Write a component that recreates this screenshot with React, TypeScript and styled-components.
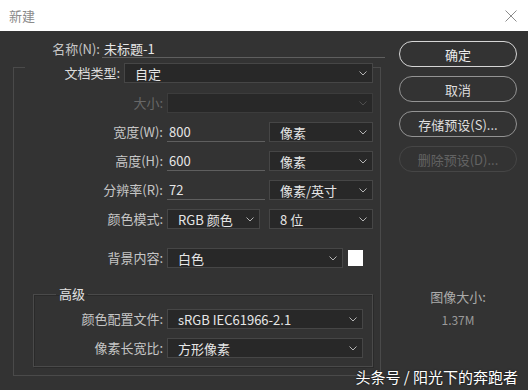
import styled, { createGlobalStyle } from "styled-components"

const Global = createGlobalStyle`
    html, body {
        margin: 0;
        padding: 0;
        background: #333333;
    }
    body {
        font-family: "Noto Sans CJK SC", "Noto Sans", sans-serif;
    }
`

const Janela = styled.div`
    position: relative;
    width: 528px;
    height: 390px;
    background: #333333;
    overflow: hidden;
`

const BarraTitulo = styled.div`
    height: 31px;
    background: #ffffff;
    display: flex;
    align-items: center;
    justify-content: space-between;
    padding: 0 11px 0 9px;
    box-sizing: border-box;
`

const Titulo = styled.span`
    font-size: 13px;
    color: #8a8a8a;
`

const Corpo = styled.div`
    display: flex;
    gap: 14px;
    padding-left: 13px;
`

const ColunaEsquerda = styled.div`
    width: 372px;
    display: flex;
    flex-direction: column;
`

const LinhaNome = styled.div`
    display: flex;
    align-items: center;
    gap: 2px;
    margin-top: 9px;
    height: 18px;
`

const Rotulo = styled.label<{ $dim?: boolean; $w?: number }>`
    ${({ $w }) => ($w ? `width: ${$w}px;` : "")}
    flex-shrink: 0;
    text-align: right;
    font-size: 13px;
    line-height: 20px;
    white-space: nowrap;
    color: ${({ $dim }) => ($dim ? "#686868" : "#c6c6c6")};
`

const CampoTexto = styled.div<{ $w: number }>`
    width: ${({ $w }) => $w}px;
    height: 18px;
    box-sizing: border-box;
    border-bottom: 1px solid #5f5f5f;
    padding-left: 2px;
    font-size: 13px;
    line-height: 17px;
    color: #e6e6e6;
    white-space: nowrap;
`

const Grupo = styled.fieldset<{ $inner?: boolean }>`
    margin: ${({ $inner }) => ($inner ? "9px 0 0 19px" : "-7px 0 0 0")};
    padding: ${({ $inner }) => ($inner ? "7px 9px 8px 0" : "10px 7px 8px 0")};
    width: ${({ $inner }) => ($inner ? "auto" : "368px")};
    box-sizing: border-box;
    min-inline-size: 0;
    border: 1px solid #4a4a4a;
    box-shadow: ${({ $inner }) => ($inner ? "inset 1px 1px 0 #2a2a2a, 1px 1px 0 #2a2a2a" : "none")};
    display: flex;
    flex-direction: column;
    gap: 9px;
`

const LegendaTipo = styled.legend`
    margin-left: 11px;
    padding: 12px 0 0 0;
    display: flex;
    align-items: center;
    gap: 4px;
`

const LegendaAvancado = styled.legend`
    margin-left: 22px;
    padding: 0 3px;
    font-size: 13px;
    line-height: 16px;
    color: #e2e2e2;
`

const Linha = styled.div<{ $label: number; $extra?: number }>`
    display: grid;
    grid-template-columns: ${({ $label }) => $label}px 1fr;
    column-gap: 4px;
    align-items: center;
    height: 20px;
    margin-top: ${({ $extra }) => $extra || 0}px;
`

const Campos = styled.div<{ $gap?: number }>`
    display: flex;
    align-items: center;
    gap: ${({ $gap }) => $gap ?? 4}px;
`

const Selecao = styled.div<{ $w?: number; $disabled?: boolean }>`
    width: ${({ $w }) => ($w ? `${$w}px` : "100%")};
    height: 20px;
    box-sizing: border-box;
    border: 1px solid ${({ $disabled }) => ($disabled ? "#3c3c3c" : "#464646")};
    background: #282828;
    display: flex;
    align-items: center;
    justify-content: space-between;
    padding: 0 5px 0 10px;
    font-size: 13px;
    color: #e6e6e6;
    white-space: nowrap;
    svg {
        flex-shrink: 0;
    }
`

const Entrada = styled.div<{ $w: number }>`
    width: ${({ $w }) => $w}px;
    height: 20px;
    box-sizing: border-box;
    border-bottom: 1px solid #5f5f5f;
    padding-left: 2px;
    font-size: 13px;
    line-height: 19px;
    color: #e6e6e6;
`

const Amostra = styled.div`
    width: 15px;
    height: 16px;
    background: #ffffff;
    margin-left: 1px;
`

const ColunaDireita = styled.div`
    width: 118px;
    display: flex;
    flex-direction: column;
    gap: 9px;
    margin-top: 10px;
`

const Botao = styled.button<{ $principal?: boolean }>`
    height: 26px;
    border-radius: 13px;
    background: transparent;
    font-family: inherit;
    font-size: 13px;
    padding: 0;
    border: ${({ $principal }) => ($principal ? "1.5px solid #d6d6d6" : "1px solid #939393")};
    color: ${({ $principal }) => ($principal ? "#ececec" : "#dedede")};
    &:disabled {
        border-color: #464646;
        color: #636363;
    }
`

const Info = styled.div`
    margin-top: 108px;
    display: flex;
    flex-direction: column;
    align-items: center;
    gap: 7px;
`

const InfoRotulo = styled.span`
    font-size: 13px;
    line-height: 16px;
    color: #ababab;
`

const InfoValor = styled.span`
    font-size: 12px;
    line-height: 16px;
    color: #9a9a9a;
`

const MarcaDagua = styled.div`
    position: absolute;
    right: 10px;
    bottom: 4px;
    font-size: 15px;
    line-height: 18px;
    color: #ffffff;
    text-shadow: 0 0 2px rgba(0, 0, 0, 0.7);
`

function Seta({ dim }: { dim?: boolean }) {
    return (
        <svg width="8" height="5" viewBox="0 0 8 5">
            <polyline points="0.5,0.5 4,4 7.5,0.5" fill="none" stroke={dim ? "#4e4e4e" : "#b4b4b4"} strokeWidth="1" />
        </svg>
    )
}

function Fechar() {
    return (
        <svg width="12" height="12" viewBox="0 0 12 12">
            <path d="M0.5 0.5 L11.5 11.5 M11.5 0.5 L0.5 11.5" stroke="#8c8c8c" strokeWidth="1" />
        </svg>
    )
}

export default function App() {
    return (
        <Janela>
            <Global />
            <BarraTitulo>
                <Titulo>新建</Titulo>
                <Fechar />
            </BarraTitulo>
            <Corpo>
                <ColunaEsquerda>
                    <LinhaNome>
                        <Rotulo $w={87}>名称(N):</Rotulo>
                        <CampoTexto $w={283}>未标题-1</CampoTexto>
                    </LinhaNome>
                    <Grupo>
                        <LegendaTipo>
                            <Rotulo $w={95} style={{ color: "#dcdcdc" }}>文档类型:</Rotulo>
                            <Selecao $w={249}>自定<Seta /></Selecao>
                        </LegendaTipo>
                        <Linha $label={149}>
                            <Rotulo $dim>大小:</Rotulo>
                            <Selecao $disabled><span /><Seta dim /></Selecao>
                        </Linha>
                        <Linha $label={149}>
                            <Rotulo>宽度(W):</Rotulo>
                            <Campos>
                                <Entrada $w={98}>800</Entrada>
                                <Selecao $w={104}>像素<Seta /></Selecao>
                            </Campos>
                        </Linha>
                        <Linha $label={149}>
                            <Rotulo>高度(H):</Rotulo>
                            <Campos>
                                <Entrada $w={98}>600</Entrada>
                                <Selecao $w={104}>像素<Seta /></Selecao>
                            </Campos>
                        </Linha>
                        <Linha $label={149}>
                            <Rotulo>分辨率(R):</Rotulo>
                            <Campos>
                                <Entrada $w={98}>72</Entrada>
                                <Selecao $w={104}>像素/英寸<Seta /></Selecao>
                            </Campos>
                        </Linha>
                        <Linha $label={149}>
                            <Rotulo>颜色模式:</Rotulo>
                            <Campos $gap={9}>
                                <Selecao $w={93}>RGB 颜色<Seta /></Selecao>
                                <Selecao $w={104}>8 位<Seta /></Selecao>
                            </Campos>
                        </Linha>
                        <Linha $label={149} $extra={10}>
                            <Rotulo>背景内容:</Rotulo>
                            <Campos $gap={4}>
                                <Selecao $w={176}>白色<Seta /></Selecao>
                                <Amostra />
                            </Campos>
                        </Linha>
                        <Grupo $inner>
                            <LegendaAvancado>高级</LegendaAvancado>
                            <Linha $label={129}>
                                <Rotulo>颜色配置文件:</Rotulo>
                                <Selecao>sRGB IEC61966-2.1<Seta /></Selecao>
                            </Linha>
                            <Linha $label={129}>
                                <Rotulo>像素长宽比:</Rotulo>
                                <Selecao>方形像素<Seta /></Selecao>
                            </Linha>
                        </Grupo>
                    </Grupo>
                </ColunaEsquerda>
                <ColunaDireita>
                    <Botao $principal>确定</Botao>
                    <Botao>取消</Botao>
                    <Botao>存储预设(S)...</Botao>
                    <Botao disabled>删除预设(D)...</Botao>
                    <Info>
                        <InfoRotulo>图像大小:</InfoRotulo>
                        <InfoValor>1.37M</InfoValor>
                    </Info>
                </ColunaDireita>
            </Corpo>
            <MarcaDagua>头条号 / 阳光下的奔跑者</MarcaDagua>
        </Janela>
    )
}
